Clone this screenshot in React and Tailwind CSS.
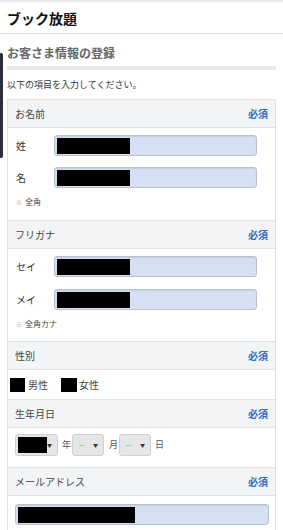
import React from "react";

const Required = () => (
  <span className="text-[10px] font-bold text-[#2a6cc6]">必須</span>
);

const SectionHead = ({ label }) => (
  <div className="h-[28px] flex items-center justify-between px-[7px] bg-[#f2f4f6] border-b border-[#dfe3e6] text-[10px] text-[#444]">
    <span>{label}</span>
    <Required />
  </div>
);

const TextInput = ({ width = "w-[203px]", black = "w-[73px]" }) => (
  <div className={`${width} h-[21px] rounded-[3px] border border-[#b8c2ce] bg-[#d5e1f2] flex items-center pl-[2px] shadow-[inset_0_1px_1px_rgba(0,0,0,0.08)]`}>
    <div className={`${black} h-[16px] bg-black`} />
  </div>
);

const Select = ({ width, children }) => (
  <div className={`${width} h-[22px] rounded-[3px] border border-[#cfcfcf] bg-[#e6e6e6] flex items-center justify-between pl-[2px] pr-[5px] text-[8px] text-[#888]`}>
    {children}
    <span className="text-[5px] text-[#333]">▼</span>
  </div>
);

export default function App() {
  return (
    <div className="relative w-[283px] h-[530px] overflow-hidden bg-white text-[#333] font-['Noto_Sans_CJK_JP',sans-serif]">
      <div className="h-[3px] bg-gradient-to-b from-[#e2e2e2] to-white" />
      <header className="h-[31px] flex items-center px-[7px] border-b border-[#dcdcdc]">
        <h1 className="text-[14px] font-bold text-[#111] leading-none">ブック放題</h1>
      </header>

      <div className="absolute left-0 top-[53px] w-[3px] h-[105px] rounded-r-[2px] bg-[#2d2d3d]" />

      <main className="px-[7px] pt-[11px]">
        <h2 className="text-[12px] leading-[16px] font-bold text-[#666]">お客さま情報の登録</h2>
        <div className="mt-[5px] h-[4px] bg-[#e8eaeb]" />
        <p className="mt-[9px] text-[9px] leading-[12px] text-[#333]">以下の項目を入力してください。</p>

        <div className="mt-[8px] border border-[#dfe3e6]">
          <SectionHead label="お名前" />
          <div className="px-[8px] pt-[7px] pb-[11px] border-b border-[#dfe3e6]">
            <div className="flex items-center">
              <span className="w-[38px] text-[10px]">姓</span>
              <TextInput />
            </div>
            <div className="flex items-center mt-[11px]">
              <span className="w-[38px] text-[10px]">名</span>
              <TextInput />
            </div>
            <p className="mt-[8px] text-[8px] leading-[12px] text-[#444]">
              <span className="text-[#aaa] text-[6px] mr-[3px]">※</span>全角
            </p>
          </div>

          <SectionHead label="フリガナ" />
          <div className="px-[8px] pt-[7px] pb-[10px] border-b border-[#dfe3e6]">
            <div className="flex items-center">
              <span className="w-[38px] text-[10px]">セイ</span>
              <TextInput />
            </div>
            <div className="flex items-center mt-[12px]">
              <span className="w-[38px] text-[10px]">メイ</span>
              <TextInput />
            </div>
            <p className="mt-[8px] text-[8px] leading-[12px] text-[#444]">
              <span className="text-[#aaa] text-[6px] mr-[3px]">※</span>全角カナ
            </p>
          </div>

          <SectionHead label="性別" />
          <div className="h-[30px] flex items-center pl-[2px] border-b border-[#dfe3e6] text-[10px] text-[#444]">
            <span className="w-[15px] h-[14px] bg-black" />
            <span className="ml-[3px]">男性</span>
            <span className="ml-[13px] w-[16px] h-[14px] bg-black" />
            <span className="ml-[2px]">女性</span>
          </div>

          <SectionHead label="生年月日" />
          <div className="flex items-center px-[7px] pt-[6px] pb-[11px] border-b border-[#dfe3e6] text-[9px] text-[#555]">
            <Select width="w-[43px]">
              <span className="w-[29px] h-[16px] bg-black" />
            </Select>
            <span className="ml-[4px] w-[10px]">年</span>
            <Select width="w-[32px]">
              <span className="ml-[4px]">--</span>
            </Select>
            <span className="ml-[5px] w-[10px]">月</span>
            <Select width="w-[32px]">
              <span className="ml-[4px]">--</span>
            </Select>
            <span className="ml-[4px]">日</span>
          </div>

          <SectionHead label="メールアドレス" />
          <div className="px-[7px] pt-[8px] pb-[8px]">
            <TextInput width="w-[254px]" black="w-[117px]" />
          </div>
        </div>
      </main>
    </div>
  );
}
